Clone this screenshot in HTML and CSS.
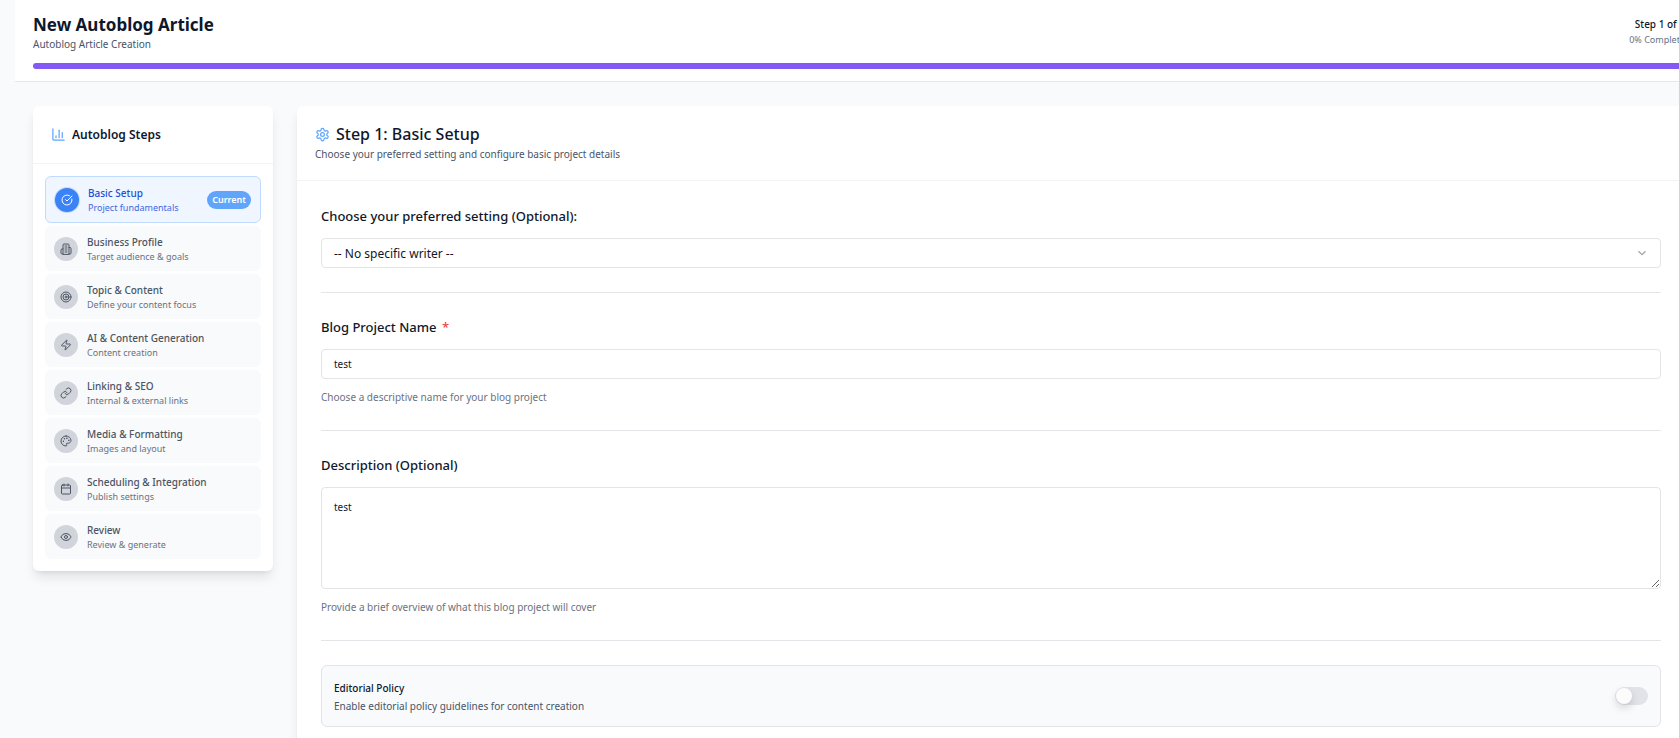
FILE: index.html
```html
<!DOCTYPE html>
<html lang="en">
<head>
<meta charset="UTF-8" />
<meta name="viewport" content="width=device-width, initial-scale=1" />
<title>New Autoblog Article</title>
<link rel="stylesheet" href="styles.css">
</head>
<body>
  <div class="page">
    <header class="topbar">
      <div class="topbar-row">
        <div>
          <h1>New Autoblog Article</h1>
          <p class="subtitle">Autoblog Article Creation</p>
        </div>
        <div class="step-info">
          <div class="step-count">Step 1 of 8</div>
          <div class="step-percent">0% Complete</div>
        </div>
      </div>
      <div class="progress"></div>
    </header>

    <div class="layout">
      <aside class="card sidebar">
        <div class="sidebar-header">
          <svg class="icon" viewBox="0 0 24 24"><path d="M3 3v16a2 2 0 0 0 2 2h16"/><path d="M18 17V9"/><path d="M13 17V5"/><path d="M8 17v-3"/></svg>
          <h2>Autoblog Steps</h2>
        </div>
        <nav class="steps">
          <a href="#" class="step active">
            <span class="step-icon"><svg viewBox="0 0 24 24"><path d="M21.801 10A10 10 0 1 1 17 3.335"/><path d="m9 11 3 3L22 4"/></svg></span>
            <span class="step-text"><span class="step-name">Basic Setup</span><span class="step-desc">Project fundamentals</span></span>
            <span class="badge">Current</span>
          </a>
          <a href="#" class="step">
            <span class="step-icon"><svg viewBox="0 0 24 24"><path d="M6 22V4a2 2 0 0 1 2-2h8a2 2 0 0 1 2 2v18Z"/><path d="M6 12H4a2 2 0 0 0-2 2v6a2 2 0 0 0 2 2h2"/><path d="M18 9h2a2 2 0 0 1 2 2v9a2 2 0 0 1-2 2h-2"/><path d="M10 6h4"/><path d="M10 10h4"/><path d="M10 14h4"/><path d="M10 18h4"/></svg></span>
            <span class="step-text"><span class="step-name">Business Profile</span><span class="step-desc">Target audience &amp; goals</span></span>
          </a>
          <a href="#" class="step">
            <span class="step-icon"><svg viewBox="0 0 24 24"><circle cx="12" cy="12" r="10"/><circle cx="12" cy="12" r="6"/><circle cx="12" cy="12" r="2"/></svg></span>
            <span class="step-text"><span class="step-name">Topic &amp; Content</span><span class="step-desc">Define your content focus</span></span>
          </a>
          <a href="#" class="step">
            <span class="step-icon"><svg viewBox="0 0 24 24"><path d="M4 14a1 1 0 0 1-.78-1.63l9.9-10.2a.5.5 0 0 1 .86.46l-1.92 6.02A1 1 0 0 0 13 10h7a1 1 0 0 1 .78 1.63l-9.9 10.2a.5.5 0 0 1-.86-.46l1.92-6.02A1 1 0 0 0 11 14z"/></svg></span>
            <span class="step-text"><span class="step-name">AI &amp; Content Generation</span><span class="step-desc">Content creation</span></span>
          </a>
          <a href="#" class="step">
            <span class="step-icon"><svg viewBox="0 0 24 24"><path d="M10 13a5 5 0 0 0 7.54.54l3-3a5 5 0 0 0-7.07-7.07l-1.72 1.71"/><path d="M14 11a5 5 0 0 0-7.54-.54l-3 3a5 5 0 0 0 7.07 7.07l1.71-1.71"/></svg></span>
            <span class="step-text"><span class="step-name">Linking &amp; SEO</span><span class="step-desc">Internal &amp; external links</span></span>
          </a>
          <a href="#" class="step">
            <span class="step-icon"><svg viewBox="0 0 24 24"><circle cx="13.5" cy="6.5" r=".5"/><circle cx="17.5" cy="10.5" r=".5"/><circle cx="8.5" cy="7.5" r=".5"/><circle cx="6.5" cy="12.5" r=".5"/><path d="M12 2C6.5 2 2 6.5 2 12s4.5 10 10 10c.926 0 1.648-.746 1.648-1.688 0-.437-.18-.835-.437-1.125-.29-.289-.438-.652-.438-1.125a1.64 1.64 0 0 1 1.668-1.668h1.996c3.051 0 5.555-2.503 5.555-5.554C21.965 6.012 17.461 2 12 2z"/></svg></span>
            <span class="step-text"><span class="step-name">Media &amp; Formatting</span><span class="step-desc">Images and layout</span></span>
          </a>
          <a href="#" class="step">
            <span class="step-icon"><svg viewBox="0 0 24 24"><path d="M8 2v4"/><path d="M16 2v4"/><rect width="18" height="18" x="3" y="4" rx="2"/><path d="M3 10h18"/></svg></span>
            <span class="step-text"><span class="step-name">Scheduling &amp; Integration</span><span class="step-desc">Publish settings</span></span>
          </a>
          <a href="#" class="step">
            <span class="step-icon"><svg viewBox="0 0 24 24"><path d="M2.062 12.348a1 1 0 0 1 0-.696 10.75 10.75 0 0 1 19.876 0 1 1 0 0 1 0 .696 10.75 10.75 0 0 1-19.876 0"/><circle cx="12" cy="12" r="3"/></svg></span>
            <span class="step-text"><span class="step-name">Review</span><span class="step-desc">Review &amp; generate</span></span>
          </a>
        </nav>
      </aside>

      <main class="card content">
        <div class="content-header">
          <div class="content-title">
            <svg class="icon" viewBox="0 0 24 24"><path d="M12.22 2h-.44a2 2 0 0 0-2 2v.18a2 2 0 0 1-1 1.73l-.43.25a2 2 0 0 1-2 0l-.15-.08a2 2 0 0 0-2.73.73l-.22.38a2 2 0 0 0 .73 2.73l.15.1a2 2 0 0 1 1 1.72v.51a2 2 0 0 1-1 1.74l-.15.09a2 2 0 0 0-.73 2.73l.22.38a2 2 0 0 0 2.73.73l.15-.08a2 2 0 0 1 2 0l.43.25a2 2 0 0 1 1 1.73V20a2 2 0 0 0 2 2h.44a2 2 0 0 0 2-2v-.18a2 2 0 0 1 1-1.73l.43-.25a2 2 0 0 1 2 0l.15.08a2 2 0 0 0 2.73-.73l.22-.39a2 2 0 0 0-.73-2.73l-.15-.08a2 2 0 0 1-1-1.74v-.5a2 2 0 0 1 1-1.74l.15-.09a2 2 0 0 0 .73-2.73l-.22-.38a2 2 0 0 0-2.73-.73l-.15.08a2 2 0 0 1-2 0l-.43-.25a2 2 0 0 1-1-1.73V4a2 2 0 0 0-2-2z"/><circle cx="12" cy="12" r="3"/></svg>
            <h2>Step 1: Basic Setup</h2>
          </div>
          <p class="subtitle">Choose your preferred setting and configure basic project details</p>
        </div>

        <form class="form">
          <div class="field">
            <label for="writer">Choose your preferred setting (Optional):</label>
            <div class="select-wrap">
              <select id="writer">
                <option>-- No specific writer --</option>
              </select>
              <svg class="chevron" viewBox="0 0 24 24"><path d="m6 9 6 6 6-6"/></svg>
            </div>
          </div>
          <div class="field">
            <label for="projectName">Blog Project Name <span class="required">*</span></label>
            <input type="text" id="projectName" value="test" />
            <p class="help">Choose a descriptive name for your blog project</p>
          </div>
          <div class="field">
            <label for="description">Description (Optional)</label>
            <textarea id="description">test</textarea>
            <p class="help">Provide a brief overview of what this blog project will cover</p>
          </div>
          <div class="policy">
            <div>
              <label for="editorialPolicy">Editorial Policy</label>
              <p class="subtitle">Enable editorial policy guidelines for content creation</p>
            </div>
            <input type="checkbox" class="toggle" id="editorialPolicy" />
          </div>
        </form>
      </main>
    </div>
  </div>
</body>
</html>
```
FILE: styles.css
```css
* {
  box-sizing: border-box;
}
body, html {
  margin: 0; padding: 0; height: 100%;
  overflow: hidden;
}
body {
  font-family: "Segoe UI", "Noto Sans", sans-serif;
  font-size: 10px;
  color: #0f172a;
  background: #f8fafc;
}
h1, h2, p {
  margin: 0;
}
/* content runs past the right edge of the window */
.page {
  margin-left: 15px;
  margin-right: -24px;
}
.topbar {
  background: white;
  border-bottom: 1px solid #e2e8f0;
  padding: 12px 18px;
}
.topbar-row {
  display: flex;
  justify-content: space-between;
  align-items: center;
  margin-bottom: 12px;
}
h1 {
  font-size: 17px;
  line-height: 25px;
  font-weight: 700;
}
.subtitle {
  font-size: 10px;
  line-height: 14px;
  color: #475569;
}
.step-info {
  text-align: right;
}
.step-count {
  font-size: 10px;
  line-height: 15px;
  font-weight: 500;
}
.step-percent {
  font-size: 9px;
  line-height: 15px;
  color: #64748b;
}
.progress {
  height: 6px;
  border-radius: 3px;
  background: #835af4;
}
.layout {
  display: flex;
  align-items: flex-start;
  gap: 24px;
  padding: 24px 18px;
}
.card {
  background: white;
  border-radius: 6px;
  box-shadow: 0 8px 12px -2px rgba(0, 0, 0, 0.1), 0 3px 5px -3px rgba(0, 0, 0, 0.1);
}
.icon {
  width: 15px;
  height: 15px;
  fill: none;
  stroke: #60a5fa;
  stroke-width: 2;
  stroke-linecap: round;
  stroke-linejoin: round;
}
.sidebar {
  width: 240px;
  flex-shrink: 0;
}
.sidebar-header {
  display: flex;
  align-items: center;
  gap: 6px;
  height: 58px;
  padding: 0 18px;
  border-bottom: 1px solid #f1f3f6;
}
.sidebar-header h2 {
  font-size: 12px;
  line-height: 20px;
  font-weight: 600;
}
.steps {
  display: flex;
  flex-direction: column;
  gap: 3px;
  padding: 12px;
}
.step {
  display: flex;
  align-items: center;
  gap: 9px;
  padding: 8px 9px;
  border-radius: 6px;
  background: #f8fafc;
  color: #4b5563;
  text-decoration: none;
}
.step-icon {
  display: flex;
  align-items: center;
  justify-content: center;
  width: 24px;
  height: 24px;
  border-radius: 50%;
  background: #d1d5db;
}
.step-icon svg {
  width: 12px;
  height: 12px;
  fill: none;
  stroke: currentColor;
  stroke-width: 2;
  stroke-linecap: round;
  stroke-linejoin: round;
}
.step-text {
  flex: 1;
}
.step-name, .step-desc {
  display: block;
}
.step-name {
  font-size: 10px;
  line-height: 16px;
  font-weight: 500;
}
.step-desc {
  font-size: 9px;
  line-height: 13px;
  color: #6b7280;
}
.step.active {
  border: 1px solid #bfdbfe;
  background: #eff6ff;
  color: #1d4ed8;
}
.active .step-icon {
  background: #3b82f6;
  color: white;
  box-shadow: 0 0 0 1px #bfdbfe;
}
.active .step-desc {
  color: #4169e1;
}
.badge {
  padding: 0 5px;
  border-radius: 9px;
  background: #60a5fa;
  color: white;
  font-size: 9px;
  line-height: 18px;
  font-weight: 600;
}
.content {
  flex: 1;
}
.content-header {
  padding: 17px 18px 19px;
  border-bottom: 1px solid #f1f3f6;
}
.content-title {
  display: flex;
  align-items: center;
  gap: 6px;
  margin-bottom: 2px;
}
.content-title h2 {
  font-size: 16px;
  line-height: 22px;
  font-weight: 500;
}
.form {
  padding: 25px 24px 24px;
}
.field {
  margin-bottom: 24px;
  padding-bottom: 24px;
  border-bottom: 1px solid #e4e4e9;
}
.field label {
  display: block;
  margin-bottom: 12px;
  font-size: 13px;
  line-height: 20px;
  font-weight: 500;
}
.required {
  margin-left: 2px;
  color: #ef4444;
}
select, input[type=text], textarea {
  display: block;
  width: 100%;
  padding: 0 12px;
  border: 1px solid #e4e4e7;
  border-radius: 4px;
  background: white;
  color: #0f172a;
  font-family: inherit;
  font-size: 10px;
}
select, input[type=text] {
  height: 30px;
}
select {
  appearance: none;
  font-size: 12px;
}
textarea {
  height: 102px;
  padding: 10px 12px;
  line-height: 18px;
  resize: vertical;
}
.select-wrap {
  position: relative;
}
.chevron {
  position: absolute;
  right: 12px;
  top: 8px;
  width: 14px;
  height: 14px;
  fill: none;
  stroke: #a1a1aa;
  stroke-width: 2;
  pointer-events: none;
}
.help {
  margin-top: 10px;
  font-size: 10px;
  line-height: 17px;
  color: #6b7280;
}
.policy {
  display: flex;
  justify-content: space-between;
  align-items: center;
  padding: 13px 12px;
  border: 1px solid #e4e4e7;
  border-radius: 6px;
  background: #f8fafc;
}
.policy label {
  display: block;
  margin-bottom: 2px;
  font-size: 10px;
  line-height: 18px;
  font-weight: 500;
}
.toggle {
  appearance: none;
  width: 33px;
  height: 18px;
  margin: 0;
  padding: 1px;
  border-radius: 9px;
  background: #e2e3e9;
  cursor: pointer;
}
.toggle::before {
  content: "";
  display: block;
  width: 16px;
  height: 16px;
  border-radius: 50%;
  background: #fcfcfd;
  box-shadow: 0 4px 8px rgba(0, 0, 0, 0.15);
}
.toggle:checked {
  background: #835af4;
}
.toggle:checked::before {
  margin-left: 15px;
}
```
